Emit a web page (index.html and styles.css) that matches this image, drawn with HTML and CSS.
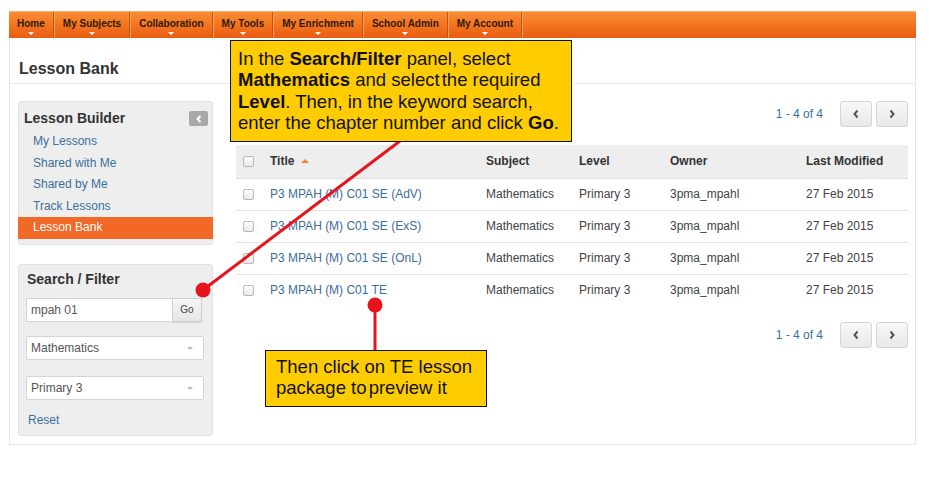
FILE: index.html
```html
<!DOCTYPE html>
<html>
<head>
<meta charset="utf-8">
<link rel="stylesheet" href="styles.css">
</head>
<body>
<div class="wrap">
  <nav class="nav">
    <a class="nav-item">Home</a>
    <a class="nav-item">My Subjects</a>
    <a class="nav-item">Collaboration</a>
    <a class="nav-item">My Tools</a>
    <a class="nav-item">My Enrichment</a>
    <a class="nav-item">School Admin</a>
    <a class="nav-item">My Account</a>
  </nav>
  <div class="page">
    <div class="page-head"><h1>Lesson Bank</h1></div>
    <div class="page-body">
      <aside class="sidebar">
        <div class="panel builder">
          <div class="panel-title">Lesson Builder
            <span class="collapse"><svg width="8" height="8" viewBox="0 0 8 8"><path d="M5.5 1 L2.5 4 L5.5 7" fill="none" stroke="#fff" stroke-width="2"/></svg></span>
          </div>
          <a class="side-link">My Lessons</a>
          <a class="side-link">Shared with Me</a>
          <a class="side-link">Shared by Me</a>
          <a class="side-link">Track Lessons</a>
          <a class="side-link active">Lesson Bank</a>
        </div>
        <div class="panel filter">
          <div class="panel-title">Search / Filter</div>
          <div class="search">
            <span class="input">mpah 01</span>
            <span class="go">Go</span>
          </div>
          <div class="select">Mathematics<span class="caret"></span></div>
          <div class="select">Primary 3<span class="caret"></span></div>
          <a class="reset">Reset</a>
        </div>
      </aside>
      <main class="content">
        <div class="pager">
          <span class="count">1 - 4 of 4</span>
          <span class="pbtn"><svg width="8" height="10" viewBox="0 0 8 10"><path d="M5.5 1.5 L2.5 5 L5.5 8.5" fill="none" stroke="#555" stroke-width="2"/></svg></span>
          <span class="pbtn"><svg width="8" height="10" viewBox="0 0 8 10"><path d="M2.5 1.5 L5.5 5 L2.5 8.5" fill="none" stroke="#555" stroke-width="2"/></svg></span>
        </div>
        <table class="grid">
          <thead>
            <tr>
              <th class="c-chk"><span class="chk"></span></th>
              <th class="c-title">Title <span class="sort"></span></th>
              <th class="c-subj">Subject</th>
              <th class="c-level">Level</th>
              <th class="c-owner">Owner</th>
              <th class="c-date">Last Modified</th>
            </tr>
          </thead>
          <tbody>
            <tr><td class="c-chk"><span class="chk"></span></td><td class="c-title"><a>P3 MPAH (M) C01 SE (AdV)</a></td><td>Mathematics</td><td>Primary 3</td><td>3pma_mpahl</td><td>27 Feb 2015</td></tr>
            <tr><td class="c-chk"><span class="chk"></span></td><td class="c-title"><a>P3 MPAH (M) C01 SE (ExS)</a></td><td>Mathematics</td><td>Primary 3</td><td>3pma_mpahl</td><td>27 Feb 2015</td></tr>
            <tr><td class="c-chk"><span class="chk"></span></td><td class="c-title"><a>P3 MPAH (M) C01 SE (OnL)</a></td><td>Mathematics</td><td>Primary 3</td><td>3pma_mpahl</td><td>27 Feb 2015</td></tr>
            <tr><td class="c-chk"><span class="chk"></span></td><td class="c-title"><a>P3 MPAH (M) C01 TE</a></td><td>Mathematics</td><td>Primary 3</td><td>3pma_mpahl</td><td>27 Feb 2015</td></tr>
          </tbody>
        </table>
        <div class="pager bottom">
          <span class="count">1 - 4 of 4</span>
          <span class="pbtn"><svg width="8" height="10" viewBox="0 0 8 10"><path d="M5.5 1.5 L2.5 5 L5.5 8.5" fill="none" stroke="#555" stroke-width="2"/></svg></span>
          <span class="pbtn"><svg width="8" height="10" viewBox="0 0 8 10"><path d="M2.5 1.5 L5.5 5 L2.5 8.5" fill="none" stroke="#555" stroke-width="2"/></svg></span>
        </div>
      </main>
    </div>
  </div>

  <svg class="arrows" width="932" height="488" viewBox="0 0 932 488">
    <line x1="400" y1="141" x2="203" y2="290" stroke="#e8141b" stroke-width="3"/>
    <circle cx="203" cy="290" r="7.5" fill="#e8141b"/>
    <line x1="375" y1="305" x2="375" y2="350" stroke="#e8141b" stroke-width="3"/>
    <circle cx="375" cy="305" r="7.5" fill="#e8141b"/>
  </svg>
  <div class="callout one">In the <b>Search/Filter</b> panel, select<br><b>Mathematics</b> and <span class="tight">select the</span> required<br><b>Level</b>. Then, in the keyword search,<br>enter the chapter number and click <b>Go</b>.</div>
  <div class="callout two">Then click on TE lesson<br>package <span class="tight">to preview</span> it</div>
</div>
</body>
</html>
```

FILE: styles.css
```css
* { box-sizing: border-box; }
html, body { margin: 0; padding: 0; background: #fff; }
body { font-family: "Liberation Sans", Arial, sans-serif; color: #333; }
.wrap { position: relative; width: 932px; height: 488px; padding: 11px 16px 0 9px; }

.nav {
  display: flex;
  height: 27px;
  background: linear-gradient(#f98e34, #f3741f 50%, #ea5c14);
  border-top: 1px solid #fbb074;
}
.nav-item {
  position: relative;
  display: flex;
  align-items: center;
  padding: 0 8px 4px 8px;
  font-size: 10px;
  font-weight: bold;
  color: #2e1a08;
  border-right: 1px solid #c9530f;
  box-shadow: 1px 0 0 #f9a05a;
  margin-right: 1px;
}
.nav-item::after {
  content: "";
  position: absolute;
  left: 50%;
  bottom: 3px;
  margin-left: -3px;
  border-left: 3px solid transparent;
  border-right: 3px solid transparent;
  border-top: 3px solid #fff;
}

.page {
  height: 407px;
  border: 1px solid #e6e6e6;
  border-top: none;
}
.page-head {
  height: 46px;
  border-bottom: 1px solid #ececec;
  display: flex;
  align-items: center;
  padding: 16px 0 0 9px;
}
.page-head h1 { margin: 0; font-size: 16px; font-weight: bold; color: #333; }

.page-body { display: flex; padding: 17px 8px 0 8px; gap: 23px; }
.sidebar { width: 195px; flex: none; display: flex; flex-direction: column; gap: 19px; }
.panel {
  background: #eeeeee;
  border: 1px solid #e2e2e2;
  border-radius: 3px;
}
.builder { height: 144px; padding: 6px 0 0 0; }
.panel-title {
  position: relative;
  font-size: 14px;
  font-weight: bold;
  color: #333;
  height: 20px;
  line-height: 20px;
  padding-left: 5px;
}
.collapse {
  position: absolute;
  right: 4px;
  top: 3px;
  width: 19px;
  height: 15px;
  background: #a9a9a9;
  border-radius: 2px;
  display: flex;
  align-items: center;
  justify-content: center;
}
.side-link {
  display: block;
  font-size: 12px;
  color: #3b6e9c;
  height: 21.5px;
  line-height: 21.5px;
  padding-left: 14px;
}
.builder .panel-title { margin-bottom: 3px; }
.side-link.active { background: #f26826; color: #fff; margin: 0 -1px; padding-left: 15px; }

.filter { height: 172px; padding: 4px 8px 0 7px; }
.filter .panel-title { padding-left: 1px; margin-bottom: 9px; }
.search { display: flex; height: 24px; width: 176px; }
.input {
  flex: 1;
  background: #fff;
  border: 1px solid #d5d5d5;
  border-right: none;
  font-size: 12px;
  color: #555;
  line-height: 22px;
  padding-left: 4px;
}
.go {
  width: 30px;
  background: linear-gradient(#f6f6f6, #e6e6e6);
  border: 1px solid #cfcfcf;
  font-size: 10px;
  color: #444;
  text-align: center;
  line-height: 22px;
  border-radius: 0 2px 2px 0;
  box-shadow: 0 1px 1px rgba(0,0,0,0.1);
}
.select {
  position: relative;
  margin-top: 14px;
  height: 24px;
  width: 178px;
  background: #fff;
  border: 1px solid #d5d5d5;
  border-radius: 2px;
  font-size: 12px;
  color: #555;
  line-height: 22px;
  padding-left: 4px;
}
.select + .select { margin-top: 16px; }
.caret {
  position: absolute;
  right: 10px;
  top: 10px;
  border-left: 3px solid transparent;
  border-right: 3px solid transparent;
  border-top: 3px solid #bbb;
}
.reset { display: block; margin-top: 13px; font-size: 12px; color: #3b6e9c; padding-left: 2px; }

.content { flex: 1; width: 672px; }
.pager { display: flex; justify-content: flex-end; align-items: center; height: 26px; gap: 4px; }
.count { font-size: 12px; color: #3b6e9c; margin-right: 13px; }
.pbtn {
  width: 32px;
  height: 26px;
  border: 1px solid #d6d6d6;
  border-radius: 3px;
  background: linear-gradient(#f7f7f7, #e9e9e9);
  display: flex;
  align-items: center;
  justify-content: center;
}
.pager.bottom { margin-top: 16px; }

.grid { margin-top: 18px; width: 672px; border-collapse: collapse; font-size: 12px; }
.grid th {
  background: #eeeeee;
  height: 33px;
  text-align: left;
  font-weight: bold;
  color: #333;
  border-bottom: 1px solid #e0e0e0;
  padding: 0;
}
.grid td { height: 32px; padding: 0; color: #444; border-bottom: 1px solid #e4e4e4; }
.grid tbody tr:last-child td { border-bottom: none; }
.grid a { color: #3b6e9c; }
.c-chk { width: 34px; padding-left: 7px !important; }
.c-title { width: 216px; }
th.c-subj { width: 93px; }
th.c-level { width: 91px; }
th.c-owner { width: 136px; }
.chk {
  display: block;
  width: 11px;
  height: 11px;
  border: 1px solid #b9b9b9;
  border-radius: 2px;
  background: linear-gradient(#fff, #e8e8e8);
}
.sort {
  display: inline-block;
  vertical-align: middle;
  margin-left: 3px;
  margin-top: -3px;
  border-left: 4px solid transparent;
  border-right: 4px solid transparent;
  border-bottom: 4px solid #f08a2c;
}

.arrows { position: absolute; left: 0; top: 0; pointer-events: none; }
.callout {
  position: absolute;
  background: #ffcc00;
  border: 1px solid #111;
  color: #111;
  font-family: "Liberation Sans", Arial, sans-serif;
  font-size: 18.5px;
  line-height: 21.4px;
  white-space: nowrap;
}
.tight { word-spacing: -3px; }
.callout.one { left: 230px; top: 40px; width: 342px; height: 102px; padding: 7px 4px 0 7px; }
.callout.two { left: 265px; top: 350px; width: 222px; height: 57px; padding: 5px 4px 0 10px; }
```
